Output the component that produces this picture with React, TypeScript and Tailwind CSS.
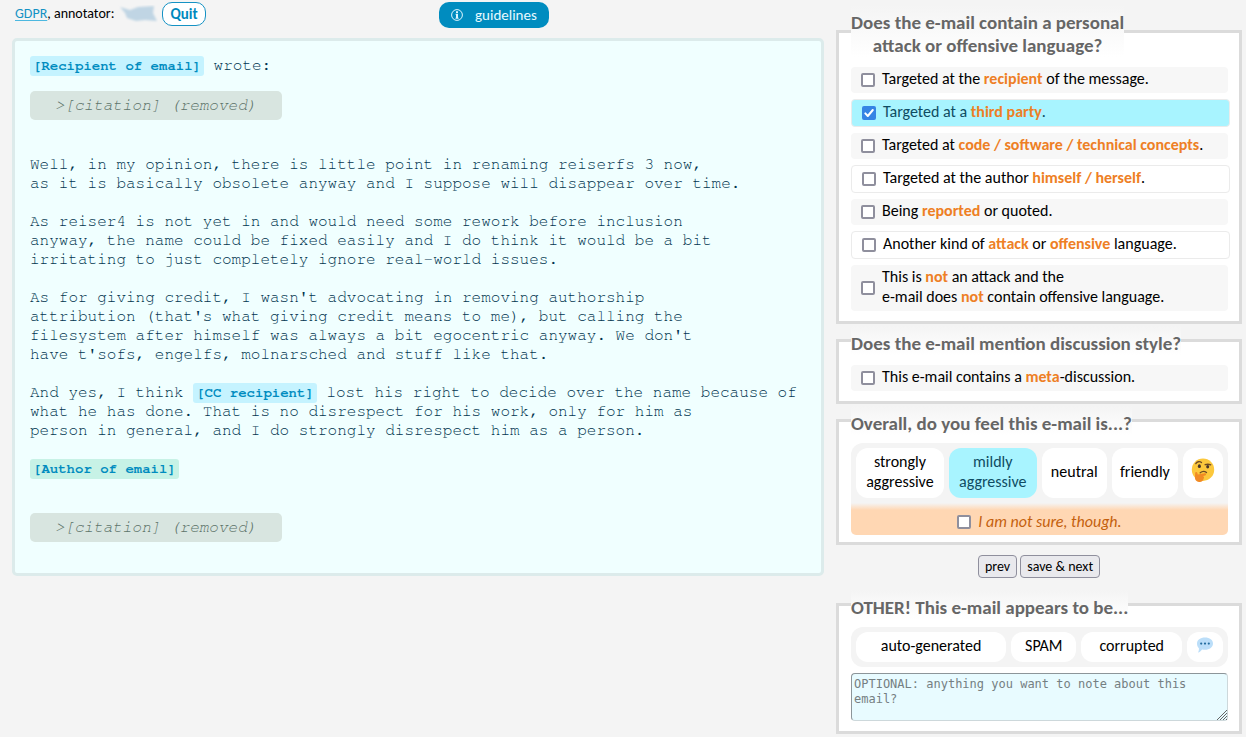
import { useId, useState, type ReactNode } from 'react';

function Mark({ children }: { children: ReactNode }) {
  return <b className="font-bold text-[#ee7f25]">{children}</b>;
}

function Tag({ children, author = false }: { children: ReactNode; author?: boolean }) {
  return (
    <b
      className={`rounded-[3px] px-[3px] py-[3px] text-[14px] leading-none font-bold text-[#008cbf] ${
        author ? 'bg-[#c7f2e6]' : 'bg-[#c5f3ff]'
      }`}
    >
      {children}
    </b>
  );
}

function Citation() {
  return (
    <div className="w-fit rounded-[5px] bg-[#d8e5e0] px-[25px] py-[5px] text-[#5c7369] italic">
      &gt;[citation] (removed)
    </div>
  );
}

function Tick({ checked }: { checked: boolean }) {
  return checked ? (
    <svg
      viewBox="0 0 14 14"
      className="pointer-events-none absolute inset-0 size-[14px]"
      fill="none"
      stroke="#fff"
      strokeWidth="2"
      strokeLinecap="round"
      strokeLinejoin="round"
    >
      <path d="M3.3 7.4 5.8 10 10.8 4" />
    </svg>
  ) : null;
}

function CheckBox({ id, checked, onChange }: { id: string; checked: boolean; onChange: (v: boolean) => void }) {
  return (
    <span className="relative block size-[14px] shrink-0">
      <input
        id={id}
        type="checkbox"
        checked={checked}
        onChange={(e) => onChange(e.target.checked)}
        className="block size-[14px] appearance-none rounded-[2px] border-2 border-[#8f8f9d] bg-white checked:border-[#3584e4] checked:bg-[#3584e4]"
      />
      <Tick checked={checked} />
    </span>
  );
}

function CheckRow({
  children,
  outlined = false,
  initial = false,
}: {
  children: ReactNode;
  outlined?: boolean;
  initial?: boolean;
}) {
  const id = useId();
  const [on, setOn] = useState(initial);
  return (
    <div
      className={`flex items-center gap-[7px] rounded-[4px] px-[10px] ${
        outlined ? '-mr-[2px] border border-[#ebebeb]' : ''
      } ${on ? 'bg-[#a8f4ff] text-[#0f4c63]' : outlined ? 'bg-white' : 'bg-[#f7f7f7]'}`}
    >
      <CheckBox id={id} checked={on} onChange={setOn} />
      <label htmlFor={id} className="flex-1 pt-[2px] pb-[4px]">
        {children}
      </label>
    </div>
  );
}

function Panel({ title, children }: { title: ReactNode; children: ReactNode }) {
  return (
    <fieldset className="mt-[2px] min-w-0 border-[3px] border-[#dbdbdb] bg-white pr-[11px] pl-[12px]">
      <legend className="bg-gradient-to-b from-[#f4f4f4] to-white pt-[6px] text-[19px] leading-[23px] font-bold text-[#666]">
        <div className="text-center">{title}</div>
      </legend>
      {children}
    </fieldset>
  );
}

function Choice({
  name,
  label,
  value,
  chosen,
  onChoose,
  className,
  children,
}: {
  name: string;
  label?: string;
  value: string;
  chosen: string;
  onChoose: (v: string) => void;
  className: string;
  children: ReactNode;
}) {
  return (
    <label
      className={`relative flex items-center justify-center rounded-[12px] pb-[2px] text-center ${className} ${
        chosen === value ? 'bg-[#a8f4ff] text-[#0f4c63]' : 'bg-white'
      }`}
    >
      <input
        type="radio"
        name={name}
        aria-label={label}
        checked={chosen === value}
        onChange={() => onChoose(value)}
        className="sr-only"
      />
      {children}
    </label>
  );
}

function ThinkingFace() {
  return (
    <svg viewBox="0 0 24 24" className="mb-[5px] size-[24px]" fill="none">
      <circle cx="12" cy="11.7" r="11.2" fill="#fcc83c" />
      <path d="M4.8 5.6C6 3.5 8.8 3.1 10.5 4.5" stroke="#6d4a25" strokeWidth="1.3" strokeLinecap="round" />
      <path d="M14.2 6.7c2-.8 4-.5 5.5.1" stroke="#6d4a25" strokeWidth="1.4" strokeLinecap="round" />
      <ellipse cx="8.4" cy="8.2" rx="1.5" ry="1.9" fill="#473528" />
      <ellipse cx="16.7" cy="8.7" rx="1.5" ry="1.8" fill="#473528" />
      <path d="M9.2 14.8c2-1.6 4.5-1.6 6.3-.3" stroke="#6d4a25" strokeWidth="1.3" strokeLinecap="round" />
      <path
        d="M4.2 15.5c-.3-1.5 1.8-2.1 2.2-.5l.4 1.4 6.9-1.1c1.6-.2 1.9 1.7.5 2.1l-2.2.6c1.5 1 1.2 2.2.5 2.8-.1 2.1-2.2 3.4-4.6 3.2-2.5-.2-4-2.2-4-4.5Z"
        fill="#f18a24"
      />
    </svg>
  );
}

function SpeechBalloon() {
  return (
    <svg viewBox="0 0 18 18" className="mb-[2px] size-[18px]">
      <path
        d="M9 1.5c4.6 0 8 2.5 8 6s-3.4 6.3-8 6.3c-1 0-2-.1-2.9-.4C5 15 3.600 16 2 16.500c.8-1.3 1-2.600.9-4.300C1.700 11.100 1 9.400 1 7.500c0-3.500 3.400-6 8-6Z"
        fill="#bbdef9"
      />
      <circle cx="5.2" cy="7.6" r="1.1" fill="#246da0" />
      <circle cx="9" cy="7.6" r="1.1" fill="#246da0" />
      <circle cx="12.8" cy="7.6" r="1.1" fill="#246da0" />
    </svg>
  );
}

export default function App() {
  const [tone, setTone] = useState('mild');
  const [other, setOther] = useState('');
  const [unsure, setUnsure] = useState(false);

  return (
    <div className="flex min-h-screen items-start gap-3 bg-[#f4f4f4] pr-1 pl-3 font-[Carlito,Lato,sans-serif] text-[16px] leading-[20px] text-black">
      <main className="min-w-0 flex-1">
        <header className="grid h-[38px] grid-cols-[427px_auto] items-start justify-start pt-[2px]">
          <div className="flex items-center pl-[3px] text-[14px]">
            <a href="#gdpr" className="text-[#1592c4] underline decoration-[#4db8e0] underline-offset-2">
              GDPR
            </a>
            <span>, annotator:</span>
            <svg viewBox="0 0 40 18" className="mx-[4px] h-[18px] w-[40px]">
              <defs>
                <filter id="smear">
                  <feGaussianBlur stdDeviation="1.2" />
                </filter>
              </defs>
              <path d="M2 2 12 5 20 2l16-1-1 7 4 8-12-1-9 1-9-3-2-5Z" fill="#c0d5e4" filter="url(#smear)" />
            </svg>
            <button className="rounded-[10px] border border-[#1592c4] bg-white px-[7px] pt-px text-[15px] leading-[21px] font-bold text-[#0089bd]">
              Quit
            </button>
          </div>
          <button className="flex items-center gap-[12px] rounded-[10px] bg-[#008cbf] px-[12px] py-[3px] text-[15px] leading-[20px] text-[#e6faff]">
            <svg viewBox="0 0 12 12" className="size-[12px]" fill="none">
              <circle cx="6" cy="6" r="5.4" stroke="#dff7ff" />
              <path d="M5 2.3h2v1.600H5zM4.600 4.800H7v4h.6v.9H4.500v-.9H5V5.700h-.4z" fill="#dff7ff" />
            </svg>
            guidelines
          </button>
        </header>

        <article className="rounded-[5px] border-[3px] border-[#dcebeb] bg-[#f0ffff] px-[15px] pt-[15px] pb-[31px] font-[FreeMono,'Courier_New','Liberation_Mono',monospace] text-[16px] leading-[19px] text-[#00354f]">
          <p>
            <Tag>[Recipient of email]</Tag> wrote:
          </p>
          <div className="pt-[16px] pb-[35px]">
            <Citation />
          </div>
          <div className="space-y-[19px] whitespace-pre-line">
            <p>
              {`Well, in my opinion, there is little point in renaming reiserfs 3 now,
as it is basically obsolete anyway and I suppose will disappear over time.`}
            </p>
            <p>
              {`As reiser4 is not yet in and would need some rework before inclusion
anyway, the name could be fixed easily and I do think it would be a bit
irritating to just completely ignore real-world issues.`}
            </p>
            <p>
              {`As for giving credit, I wasn't advocating in removing authorship
attribution (that's what giving credit means to me), but calling the
filesystem after himself was always a bit egocentric anyway. We don't
have t'sofs, engelfs, molnarsched and stuff like that.`}
            </p>
            <p>
              And yes, I think <Tag>[CC recipient]</Tag>
              {' lost his right to decide over the name because of'}
              <br />
              {`what he has done. That is no disrespect for his work, only for him as
person in general, and I do strongly disrespect him as a person.`}
            </p>
            <p>
              <Tag author>[Author of email]</Tag>
            </p>
          </div>
          <div className="pt-[35px]">
            <Citation />
          </div>
        </article>
      </main>

      <aside className="w-[406px] shrink-0 pt-[3px]">
        <Panel
          title={
            <>
              Does the e-mail contain a personal
              <br />
              attack or offensive language?
            </>
          }
        >
          <div className="flex flex-col gap-[6px] py-[10px]">
            <CheckRow>
              Targeted at the <Mark>recipient</Mark> of the message.
            </CheckRow>
            <CheckRow outlined initial>
              Targeted at a <Mark>third party</Mark>.
            </CheckRow>
            <CheckRow>
              Targeted at <Mark>code / software / technical concepts</Mark>.
            </CheckRow>
            <CheckRow outlined>
              Targeted at the author <Mark>himself / herself</Mark>.
            </CheckRow>
            <CheckRow>
              Being <Mark>reported</Mark> or quoted.
            </CheckRow>
            <CheckRow outlined>
              Another kind of <Mark>attack</Mark> or <Mark>offensive</Mark> language.
            </CheckRow>
            <CheckRow>
              This is <Mark>not</Mark> an attack and the
              <br />
              e-mail does <Mark>not</Mark> contain offensive language.
            </CheckRow>
          </div>
        </Panel>

        <Panel title="Does the e-mail mention discussion style?">
          <div className="py-[10px]">
            <CheckRow>
              This e-mail contains a <Mark>meta</Mark>-discussion.
            </CheckRow>
          </div>
        </Panel>

        <Panel title="Overall, do you feel this e-mail is...?">
          <div className="pt-[8px] pb-[7px]">
            <div className="flex gap-[5px] rounded-t-[12px] bg-[#f4f4f4] p-[5px]">
              <Choice name="tone" value="strong" chosen={tone} onChoose={setTone} className="h-[50px] grow px-[10px]">
                strongly
                <br />
                aggressive
              </Choice>
              <Choice name="tone" value="mild" chosen={tone} onChoose={setTone} className="h-[50px] grow px-[10px]">
                mildly
                <br />
                aggressive
              </Choice>
              <Choice name="tone" value="neutral" chosen={tone} onChoose={setTone} className="h-[50px] grow px-[9px]">
                neutral
              </Choice>
              <Choice name="tone" value="friendly" chosen={tone} onChoose={setTone} className="h-[50px] grow px-[8px]">
                friendly
              </Choice>
              <Choice name="tone" label="hard to tell" value="hmm" chosen={tone} onChoose={setTone} className="h-[50px] px-[8px]">
                <ThinkingFace />
              </Choice>
            </div>
            <div className="flex items-center justify-center gap-[7px] rounded-b-[5px] bg-linear-to-b from-[#f4f4f4] to-[#ffd7b3] to-[7px] pt-[9px] pb-[3px]">
              <CheckBox id="unsure" checked={unsure} onChange={setUnsure} />
              <label htmlFor="unsure" className="text-[#c45f0d] italic">
                I am not sure, though.
              </label>
            </div>
          </div>
        </Panel>

        <div className="flex justify-center gap-[3px] py-[10px]">
          <button className="rounded-[4px] border border-[#8f8f9d] bg-[#e9e9ed] px-[6px] pt-px text-[14px] leading-[20px]">
            prev
          </button>
          <button className="rounded-[4px] border border-[#8f8f9d] bg-[#e9e9ed] px-[6px] pt-px text-[14px] leading-[20px]">
            save &amp; next
          </button>
        </div>

        <Panel title="OTHER! This e-mail appears to be...">
          <div className="flex flex-col gap-[6px] pt-[8px] pb-[10px]">
            <div className="flex gap-[5px] rounded-[12px] bg-[#f4f4f4] p-[5px]">
              <Choice name="other" value="auto" chosen={other} onChoose={setOther} className="h-[30px] grow px-[20px]">
                auto-generated
              </Choice>
              <Choice name="other" value="spam" chosen={other} onChoose={setOther} className="h-[30px] px-[14px]">
                SPAM
              </Choice>
              <Choice name="other" value="corrupted" chosen={other} onChoose={setOther} className="h-[30px] px-[18px]">
                corrupted
              </Choice>
              <Choice name="other" label="something else" value="else" chosen={other} onChoose={setOther} className="h-[30px] px-[9px]">
                <SpeechBalloon />
              </Choice>
            </div>
            <div className="relative">
              <textarea
                aria-label="Note"
                rows={3}
                placeholder="OPTIONAL: anything you want to note about this email?"
                className="block h-[48px] w-full resize-none overflow-hidden rounded-[4px] border border-t-[#8c9599] border-r-[#cdd8db] border-b-[#cdd8db] border-l-[#8c9599] bg-[#e8fbff] px-[2px] py-[3px] font-['DejaVu_Sans_Mono',monospace] text-[12px] leading-[15px] placeholder:text-[#757f82]"
              />
              <svg
                viewBox="0 0 10 10"
                className="pointer-events-none absolute right-[1px] bottom-[1px] size-[10px]"
                stroke="#555"
                strokeWidth="0.9"
              >
                <path d="M0 10 10 0M3 10l7-7M6 10l4-4M9 10l1-1" />
              </svg>
            </div>
          </div>
        </Panel>
      </aside>
    </div>
  );
}
